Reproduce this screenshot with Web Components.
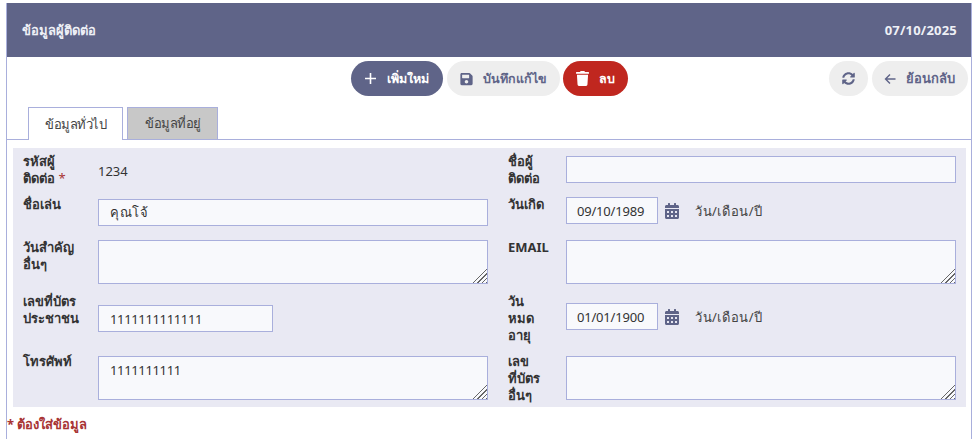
<!DOCTYPE html>
<html lang="th">
<head>
<meta charset="utf-8">
<title>ข้อมูลผู้ติดต่อ</title>
<style>
    html, body { margin: 0; padding: 0; background: #fff; }
    body { font: 13px/17px "Noto Sans", "DejaVu Sans", sans-serif; color: #333; }
</style>
</head>
<body>
<contact-panel title-text="ข้อมูลผู้ติดต่อ" date="07/10/2025">
    <tool-bar>
        <div slot="center">
            <tool-button kind="primary" icon="plus">เพิ่มใหม่</tool-button>
            <tool-button icon="save">บันทึกแก้ไข</tool-button>
            <tool-button kind="danger" icon="trash">ลบ</tool-button>
        </div>
        <div slot="right">
            <tool-button icon="sync"></tool-button>
            <tool-button icon="back" style="font-size: 13px; padding: 0 13px 0 12px">ย้อนกลับ</tool-button>
        </div>
    </tool-bar>
    <tab-strip>
        <tab-item active>ข้อมูลทั่วไป</tab-item>
        <tab-item>ข้อมูลที่อยู่</tab-item>
    </tab-strip>
    <form-grid>
        <form-field label="รหัสผู้|ติดต่อ" required><span class="plain">1234</span></form-field>
        <form-field label="ชื่อผู้|ติดต่อ" side="right"><text-box></text-box></form-field>
        <form-field label="ชื่อเล่น"><text-box value="คุณโจ้" spacing="0.5"></text-box></form-field>
        <form-field label="วันเกิด" side="right" top="2"><date-box value="09/10/1989"></date-box></form-field>
        <form-field label="วันสำคัญ|อื่นๆ" label-top="3"><area-box></area-box></form-field>
        <form-field label="EMAIL" side="right" label-top="3"><area-box></area-box></form-field>
        <form-field label="เลขที่บัตร|ประชาชน" top="13"><text-box value="1111111111111" width="175" spacing="-0.35"></text-box></form-field>
        <form-field label="วัน|หมด|อายุ" side="right" top="11"><date-box value="01/01/1900"></date-box></form-field>
        <form-field label="โทรศัพท์"><area-box value="1111111111"></area-box></form-field>
        <form-field label="เลข|ที่บัตร|อื่นๆ" side="right"><area-box></area-box></form-field>
    </form-grid>
    <div slot="note">* ต้องใส่ข้อมูล</div>
</contact-panel>

<script>
const ICONS = {
    plus: '<svg width="13" height="13" viewBox="0 0 13 13"><path d="M6.5 1v11M1 6.5h11" stroke="currentColor" stroke-width="1.6" fill="none"/></svg>',
    back: '<svg width="12" height="12" viewBox="0 0 12 12"><path d="M6 1.5 1.5 6 6 10.500M1.500 6H11.500" stroke="currentColor" stroke-width="1.400" fill="none"/></svg>',
    save: '<svg width="13" height="14" viewBox="0 0 448 512"><path fill="currentColor" d="M433.941 129.941l-83.882-83.882A48 48 0 0 0 316.118 32H48C21.49 32 0 53.49 0 80v352c0 26.51 21.49 48 48 48h352c26.51 0 48-21.49 48-48V163.882a48 48 0 0 0-14.059-33.941zM224 416c-35.346 0-64-28.654-64-64 0-35.346 28.654-64 64-64s64 28.654 64 64c0 35.346-28.654 64-64 64zm96-304.520V212c0 6.627-5.373 12-12 12H76c-6.627 0-12-5.373-12-12V108c0-6.627 5.373-12 12-12h228.520c3.183 0 6.235 1.264 8.485 3.515l3.480 3.480A11.996 11.996 0 0 1 320 111.480z"/></svg>',
    trash: '<svg width="13" height="15" viewBox="0 0 448 512"><path fill="currentColor" d="M432 32H312l-9.400-18.700A24 24 0 0 0 281.100 0H166.800a23.720 23.720 0 0 0-21.400 13.300L136 32H16A16 16 0 0 0 0 48v32a16 16 0 0 0 16 16h416a16 16 0 0 0 16-16V48a16 16 0 0 0-16-16zM53.200 467a48 48 0 0 0 47.900 45h245.800a48 48 0 0 0 47.900-45L416 128H32z"/></svg>',
    sync: '<svg width="13" height="13" viewBox="0 0 512 512"><path fill="currentColor" d="M370.720 133.280C339.458 104.008 298.888 87.962 255.848 88c-77.458.068-144.328 53.178-162.791 126.850-1.344 5.363-6.122 9.150-11.651 9.150H24.103c-7.498 0-13.194-6.807-11.807-14.176C33.933 94.924 134.813 8 256 8c66.448 0 126.791 26.136 171.315 68.685L463.030 40.970C478.149 25.851 504 36.559 504 57.941V192c0 13.255-10.745 24-24 24H345.941c-21.382 0-32.090-25.851-16.971-40.971l41.750-41.749zM32 296h134.059c21.382 0 32.090 25.851 16.971 40.971l-41.750 41.750c31.262 29.273 71.835 45.319 114.876 45.280 77.418-.07 144.315-53.144 162.787-126.849 1.344-5.363 6.122-9.150 11.651-9.150h57.304c7.498 0 13.194 6.807 11.807 14.176C478.067 417.076 377.187 504 256 504c-66.448 0-126.791-26.136-171.315-68.685L48.970 471.030C33.851 486.149 8 475.441 8 454.059V320c0-13.255 10.745-24 24-24z"/></svg>',
    calendar: '<svg width="14" height="16" viewBox="0 0 448 512"><path fill="currentColor" d="M0 464c0 26.500 21.500 48 48 48h352c26.500 0 48-21.500 48-48V192H0v272zm320-196c0-6.600 5.400-12 12-12h40c6.600 0 12 5.400 12 12v40c0 6.600-5.400 12-12 12h-40c-6.600 0-12-5.400-12-12v-40zm0 128c0-6.600 5.400-12 12-12h40c6.600 0 12 5.400 12 12v40c0 6.600-5.400 12-12 12h-40c-6.600 0-12-5.400-12-12v-40zM192 268c0-6.600 5.400-12 12-12h40c6.600 0 12 5.400 12 12v40c0 6.600-5.400 12-12 12h-40c-6.600 0-12-5.400-12-12v-40zm0 128c0-6.600 5.400-12 12-12h40c6.600 0 12 5.400 12 12v40c0 6.600-5.400 12-12 12h-40c-6.600 0-12-5.400-12-12v-40zM64 268c0-6.600 5.400-12 12-12h40c6.600 0 12 5.400 12 12v40c0 6.600-5.400 12-12 12H76c-6.600 0-12-5.400-12-12v-40zm0 128c0-6.600 5.400-12 12-12h40c6.600 0 12 5.400 12 12v40c0 6.600-5.400 12-12 12H76c-6.600 0-12-5.400-12-12v-40zM400 64h-48V16c0-8.800-7.200-16-16-16h-32c-8.800 0-16 7.200-16 16v48H160V16c0-8.800-7.200-16-16-16h-32c-8.800 0-16 7.200-16 16v48H48C21.500 64 0 85.500 0 112v48h448v-48c0-26.500-21.500-48-48-48z"/></svg>'
};

const BOX_STYLE = `
    box-sizing: border-box;
    border: 1px solid #a9afdc;
    background: #f8f9fc;
    color: #333;
    font: 13px/17px "Noto Sans", "DejaVu Sans", sans-serif;
    outline: none;
    margin: 0;
`;

class ContactPanel extends HTMLElement {
    connectedCallback() {
        this.attachShadow({ mode: 'open' });
        this.shadowRoot.innerHTML = `
            <style>
                :host {
                    display: block;
                    box-sizing: border-box;
                    width: 966px;
                    height: 436px;
                    margin: 3px 0 0 6px;
                    border: solid #a9afdc;
                    border-width: 0 1px;
                }
                header {
                    display: flex;
                    justify-content: space-between;
                    align-items: center;
                    height: 54px;
                    padding: 0 14px 0 15px;
                    background: #5f6488;
                    color: #eef0f6;
                    font-weight: 700;
                }
                header span:last-child { letter-spacing: 0.2px; }
                ::slotted([slot="note"]) {
                    margin-top: 9px;
                    color: #a83434;
                    font-weight: 700;
                }
            </style>
            <header><span>${this.getAttribute('title-text')}</span><span>${this.getAttribute('date')}</span></header>
            <slot></slot>
            <slot name="note"></slot>
        `;
    }
}

class ToolBar extends HTMLElement {
    connectedCallback() {
        this.attachShadow({ mode: 'open' });
        this.shadowRoot.innerHTML = `
            <style>
                :host {
                    display: grid;
                    grid-template-columns: 1fr auto 1fr;
                    padding-top: 4px;
                    height: 50px;
                    box-sizing: border-box;
                }
                .c { grid-column: 2; }
                .r { grid-column: 3; justify-self: end; margin-right: 3px; }
                ::slotted(div) { display: flex; gap: 4px; }
            </style>
            <div class="c"><slot name="center"></slot></div>
            <div class="r"><slot name="right"></slot></div>
        `;
    }
}

class ToolButton extends HTMLElement {
    connectedCallback() {
        this.attachShadow({ mode: 'open' });
        this.shadowRoot.innerHTML = `
            <style>
                :host {
                    display: inline-flex;
                    align-items: center;
                    justify-content: center;
                    gap: 10px;
                    height: 35px;
                    padding: 0 13px;
                    border-radius: 18px;
                    background: #eeeeee;
                    color: #5f6488;
                    font-size: 12.5px;
                    font-weight: 700;
                }
                :host([kind="primary"]) { background: #5f6488; color: #fff; padding-right: 14px; }
                :host([kind="danger"]) { background: #c0271f; color: #fff; margin-left: -1px; }
                svg { display: block; }
            </style>
            ${ICONS[this.getAttribute('icon')]}<slot></slot>
        `;
    }
}

class TabStrip extends HTMLElement {
    connectedCallback() {
        this.attachShadow({ mode: 'open' });
        this.shadowRoot.innerHTML = `
            <style>
                :host {
                    display: flex;
                    gap: 4px;
                    height: 33px;
                    box-sizing: border-box;
                    padding-left: 21px;
                    border-bottom: 1px solid #a9afdc;
                }
            </style>
            <slot></slot>
        `;
    }
}

class TabItem extends HTMLElement {
    connectedCallback() {
        this.attachShadow({ mode: 'open' });
        this.shadowRoot.innerHTML = `
            <style>
                :host {
                    display: flex;
                    align-items: center;
                    width: 91px;
                    height: 32px;
                    box-sizing: border-box;
                    padding-left: 17px;
                    border: 1px solid #a9afdc;
                    border-bottom: 0;
                    background: #c8c8c8;
                    color: #444;
                    letter-spacing: -0.5px;
                }
                :host([active]) { background: #fff; width: 95px; height: 33px; padding-left: 16px; }
            </style>
            <slot></slot>
        `;
    }
}

class FormGrid extends HTMLElement {
    connectedCallback() {
        this.attachShadow({ mode: 'open' });
        this.shadowRoot.innerHTML = `
            <style>
                :host {
                    display: grid;
                    grid-template-columns: 485px 468px;
                    grid-template-rows: 43px 41px 56px 60px 55px;
                    margin: 8px 5px 0 6px;
                    padding-top: 4px;
                    background: #e9e9f3;
                }
            </style>
            <slot></slot>
        `;
    }
}

class FormField extends HTMLElement {
    connectedCallback() {
        const right = this.getAttribute('side') === 'right';
        const top = this.getAttribute('top') || 4;
        const labelTop = this.getAttribute('label-top') || 1;
        const star = this.hasAttribute('required') ? ' <i>*</i>' : '';
        const label = this.getAttribute('label').split('|').join('<br>');
        this.attachShadow({ mode: 'open' });
        this.shadowRoot.innerHTML = `
            <style>
                :host {
                    display: grid;
                    grid-template-columns: ${right ? '58px 390px' : '75px 390px'};
                    padding-left: 10px;
                    align-items: start;
                }
                label { font-weight: 700; margin-top: ${labelTop}px; }
                i { color: #a83434; font-style: normal; font-weight: 400; }
                .ctl { margin-top: ${top}px; }
                ::slotted(.plain) { display: block; margin-top: 7px; }
            </style>
            <label>${label}${star}</label>
            <div class="ctl"><slot></slot></div>
        `;
    }
}

class TextBox extends HTMLElement {
    connectedCallback() {
        this.attachShadow({ mode: 'open' });
        const width = this.getAttribute('width') || 390;
        const spacing = this.getAttribute('spacing') || 0;
        this.shadowRoot.innerHTML = `
            <style>
                :host { display: block; }
                input { ${BOX_STYLE} display: block; width: ${width}px; height: 27px; padding: 0 11px; letter-spacing: ${spacing}px; }
            </style>
            <input type="text" value="${this.getAttribute('value') || ''}">
        `;
    }
}

class DateBox extends HTMLElement {
    connectedCallback() {
        this.attachShadow({ mode: 'open' });
        this.shadowRoot.innerHTML = `
            <style>
                :host { display: flex; align-items: center; color: #444; }
                input { ${BOX_STYLE} display: block; width: 92px; height: 27px; padding: 0 10px; letter-spacing: -0.2px; }
                svg { display: block; margin: 0 16px 0 7px; color: #5f6488; }
                span { margin-top: 1px; letter-spacing: 0.55px; }
            </style>
            <input type="text" value="${this.getAttribute('value')}">
            ${ICONS.calendar}
            <span>วัน/เดือน/ปี</span>
        `;
    }
}

class AreaBox extends HTMLElement {
    connectedCallback() {
        this.attachShadow({ mode: 'open' });
        this.shadowRoot.innerHTML = `
            <style>
                :host { display: block; }
                textarea { ${BOX_STYLE} display: block; width: 390px; height: 44px; padding: 5px 11px; letter-spacing: -0.35px; }
                textarea::-webkit-resizer {
                    background:
                        linear-gradient(135deg, #f8f9fc 52%, transparent 52%),
                        repeating-linear-gradient(135deg, #f8f9fc 0 2px, #666 2px 3px);
                }
            </style>
            <textarea>${this.getAttribute('value') || ''}</textarea>
        `;
    }
}

customElements.define('contact-panel', ContactPanel);
customElements.define('tool-bar', ToolBar);
customElements.define('tool-button', ToolButton);
customElements.define('tab-strip', TabStrip);
customElements.define('tab-item', TabItem);
customElements.define('form-grid', FormGrid);
customElements.define('form-field', FormField);
customElements.define('text-box', TextBox);
customElements.define('date-box', DateBox);
customElements.define('area-box', AreaBox);
</script>
</body>
</html>
